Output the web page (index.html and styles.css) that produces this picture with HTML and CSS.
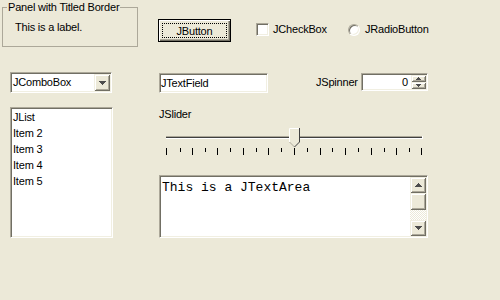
FILE: index.html
```html
<!DOCTYPE html>
<html lang="en">
<head>
    <meta charset="UTF-8">
    <meta name="viewport" content="width=device-width, initial-scale=1.0">
    <title>Swing Components</title>
    <link rel="stylesheet" href="styles.css">
</head>
<body>
    <div class="frame">
        <div class="row row-top">
            <fieldset class="titled">
                <legend>Panel with Titled Border</legend>
                <div class="label">This is a label.</div>
            </fieldset>
            <div class="button"><span class="button-focus">JButton</span></div>
            <div class="check"><span class="check-box sunken"></span>JCheckBox</div>
            <div class="radio"><span class="radio-dot sunken"></span>JRadioButton</div>
        </div>

        <div class="row row-mid">
            <div class="combo sunken">
                <span class="combo-text">JComboBox</span>
                <span class="combo-arrow raised">
                    <svg width="7" height="4" viewBox="0 0 7 4"><path d="M0 0h7v1H0zM1 1h5v1H1zM2 2h3v1H2zM3 3h1v1H3z" fill="#4d4d4d"/></svg>
                </span>
            </div>
            <div class="field sunken">JTextField</div>
            <div class="spinner-label">JSpinner</div>
            <div class="spinner sunken">
                <span class="spinner-value">0</span>
                <span class="spinner-buttons">
                    <span class="spin-btn raised">
                        <svg width="5" height="3" viewBox="0 0 5 3"><path d="M2 0h1v1H2zM1 1h3v1H1zM0 2h5v1H0z" fill="#4d4d4d"/></svg>
                    </span>
                    <span class="spin-btn raised">
                        <svg width="5" height="3" viewBox="0 0 5 3"><path d="M0 0h5v1H0zM1 1h3v1H1zM2 2h1v1H2z" fill="#4d4d4d"/></svg>
                    </span>
                </span>
            </div>
        </div>

        <div class="row row-bottom">
            <ul class="list sunken">
                <li>JList</li>
                <li>Item 2</li>
                <li>Item 3</li>
                <li>Item 4</li>
                <li>Item 5</li>
            </ul>
            <div class="right-col">
                <div class="slider-label">JSlider</div>
                <svg class="slider" width="269" height="54" viewBox="0 0 269 54" shape-rendering="crispEdges">
                    <!-- track -->
                    <rect x="7" y="15" width="257" height="1" fill="#aca899"/>
                    <rect x="7" y="16" width="256" height="1" fill="#404040"/>
                    <rect x="7" y="17" width="257" height="1" fill="#fff"/>
                    <rect x="263" y="15" width="1" height="3" fill="#fff"/>
                    <!-- ticks -->
                    <g fill="#000">
                        <rect x="7" y="27" width="1" height="7"/>
                        <rect x="21" y="27" width="1" height="4"/>
                        <rect x="33" y="27" width="1" height="7"/>
                        <rect x="46" y="27" width="1" height="4"/>
                        <rect x="58" y="27" width="1" height="7"/>
                        <rect x="71" y="27" width="1" height="4"/>
                        <rect x="84" y="27" width="1" height="7"/>
                        <rect x="97" y="27" width="1" height="4"/>
                        <rect x="109" y="27" width="1" height="7"/>
                        <rect x="122" y="27" width="1" height="4"/>
                        <rect x="135" y="27" width="1" height="7"/>
                        <rect x="148" y="27" width="1" height="4"/>
                        <rect x="161" y="27" width="1" height="7"/>
                        <rect x="173" y="27" width="1" height="4"/>
                        <rect x="186" y="27" width="1" height="7"/>
                        <rect x="199" y="27" width="1" height="4"/>
                        <rect x="212" y="27" width="1" height="7"/>
                        <rect x="225" y="27" width="1" height="4"/>
                        <rect x="237" y="27" width="1" height="7"/>
                        <rect x="250" y="27" width="1" height="4"/>
                        <rect x="262" y="27" width="1" height="7"/>
                    </g>
                    <!-- thumb -->
                    <g shape-rendering="auto">
                        <polygon points="130,7 141,7 141,21 135.5,26.5 130,21" fill="#ece9d8"/>
                        <path d="M130.5 21V7.5H140" fill="none" stroke="#fff"/>
                        <path d="M130.5 21L135.5 26" fill="none" stroke="#aca899"/>
                        <path d="M140.5 7V21L135.5 26" fill="none" stroke="#404040"/>
                    </g>
                </svg>
                <div class="textarea sunken">
                    <div class="textarea-text">This is a JTextArea</div>
                    <div class="scrollbar">
                        <span class="scroll-btn raised">
                            <svg width="7" height="4" viewBox="0 0 7 4"><path d="M3 0h1v1H3zM2 1h3v1H2zM1 2h5v1H1zM0 3h7v1H0z" fill="#4d4d4d"/></svg>
                        </span>
                        <span class="scroll-thumb raised"></span>
                        <span class="scroll-track"></span>
                        <span class="scroll-btn raised">
                            <svg width="7" height="4" viewBox="0 0 7 4"><path d="M0 0h7v1H0zM1 1h5v1H1zM2 2h3v1H2zM3 3h1v1H3z" fill="#4d4d4d"/></svg>
                        </span>
                    </div>
                </div>
            </div>
        </div>
    </div>
</body>
</html>
```

FILE: styles.css
```css
* {
  box-sizing: border-box;
}

body {
  margin: 0;
  background-color: #ece9d8;
  font-family: "Liberation Sans", Arial, sans-serif;
  font-size: 11px;
  letter-spacing: -0.2px;
  color: #000;
}

.frame {
  width: 500px;
  height: 300px;
  overflow: hidden;
}

/* 3d borders */
.sunken {
  border: 1px solid;
  border-color: #aca899 #fff #fff #aca899;
  box-shadow: inset 1px 1px 0 #716f64, inset -1px -1px 0 #f1efe2;
  padding: 1px;
  background-color: #fff;
}

.raised {
  background-color: #ece9d8;
  box-shadow: inset 1px 1px 0 #f1efe2, inset -1px -1px 0 #716f64,
    inset 2px 2px 0 #fff, inset -2px -2px 0 #aca899;
}

.row {
  display: flex;
  align-items: flex-start;
}

/* top row */
.row-top {
  height: 47px;
  padding-left: 2px;
}

.titled {
  margin: 0;
  padding: 0;
  width: 136px;
  height: 47px;
  border: 1px solid #aca899;
}

.titled legend {
  margin-left: 4px;
  padding: 0 1px;
  line-height: 14px;
}

.label {
  margin: 6px 0 0 12px;
  line-height: 14px;
}

.button {
  margin: 19px 0 0 20px;
  width: 73px;
  height: 23px;
  padding: 3px;
  border: 1px solid #000;
  background-color: #ece9d8;
  box-shadow: inset 1px 1px 0 #fff, inset -1px -1px 0 #716f64, inset -2px -2px 0 #aca899;
  display: flex;
}

.button-focus {
  flex: 1;
  border: 1px dotted #000;
  display: flex;
  align-items: center;
  justify-content: center;
}

.check {
  margin: 23px 0 0 25px;
  width: 92px;
  display: flex;
  align-items: center;
  gap: 4px;
  line-height: 13px;
}

.check-box {
  width: 13px;
  height: 13px;
}

.radio {
  margin-top: 23px;
  display: flex;
  align-items: center;
  gap: 5px;
  line-height: 13px;
}

.radio-dot {
  width: 12px;
  height: 12px;
  border-radius: 50%;
}

/* middle row */
.row-mid {
  padding-top: 25px;
}

.combo {
  margin-left: 10px;
  width: 102px;
  height: 21px;
  display: flex;
}

.combo-text {
  flex: 1;
  padding-left: 1px;
  line-height: 17px;
}

.combo-arrow {
  width: 16px;
  display: flex;
  align-items: center;
  justify-content: center;
}

.field {
  margin: 1px 0 0 47px;
  width: 109px;
  height: 20px;
  line-height: 16px;
}

.spinner-label {
  margin: 1px 0 0 48px;
  width: 45px;
  line-height: 18px;
}

.spinner {
  margin-top: 1px;
  width: 67px;
  height: 18px;
  display: flex;
}

.spinner-value {
  flex: 1;
  text-align: right;
  padding-right: 3px;
  line-height: 14px;
}

.spinner-buttons {
  width: 15px;
  display: flex;
  flex-direction: column;
}

.spin-btn {
  flex: 1;
  display: flex;
  align-items: center;
  justify-content: center;
}

/* bottom row */
.row-bottom {
  margin-top: 14px;
}

.list {
  margin: 0 0 0 10px;
  width: 103px;
  height: 131px;
  list-style: none;
  padding: 1px 1px 1px 2px;
}

.list li {
  line-height: 16px;
}

.right-col {
  margin-left: 46px;
  width: 269px;
}

.slider-label {
  line-height: 14px;
}

.slider {
  display: block;
}

.textarea {
  height: 63px;
  display: flex;
}

.textarea-text {
  flex: 1;
  font-family: "Liberation Mono", "Courier New", monospace;
  font-size: 13px;
  letter-spacing: 0;
  line-height: 15px;
  padding: 3px 0 0 1px;
}

.scrollbar {
  width: 16px;
  display: flex;
  flex-direction: column;
}

.scroll-btn {
  height: 16px;
  display: flex;
  align-items: center;
  justify-content: center;
}

.scroll-thumb {
  height: 17px;
}

.scroll-track {
  flex: 1;
  background: repeating-conic-gradient(#fff 0 25%, #ece9d8 0 50%) 0 0 / 2px 2px;
}
```
